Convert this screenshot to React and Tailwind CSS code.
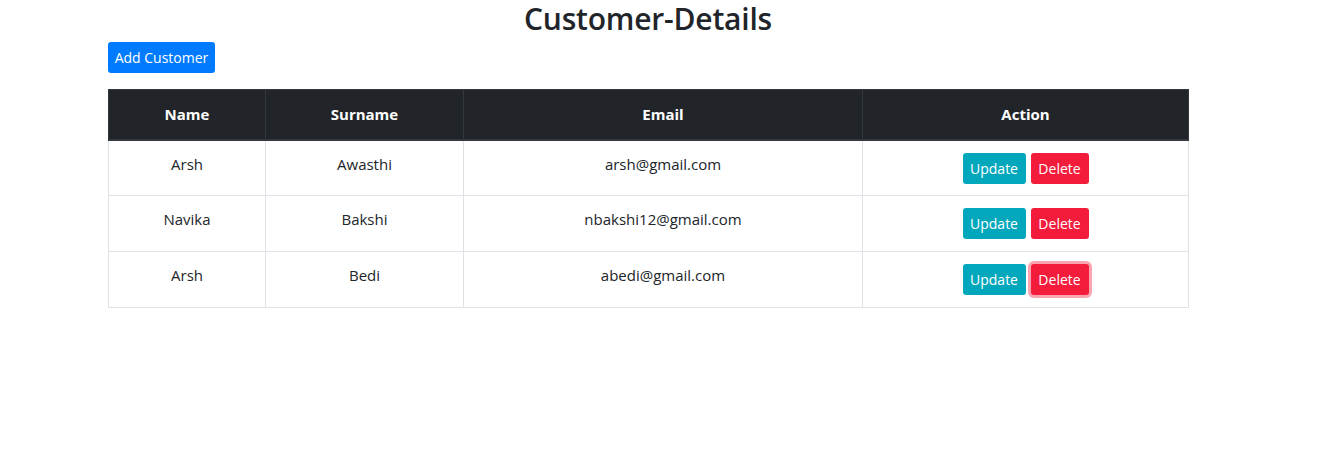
import React from "react"

const customers = [
  { name: "Arsh", surname: "Awasthi", email: "arsh@gmail.com" },
  { name: "Navika", surname: "Bakshi", email: "nbakshi12@gmail.com" },
  { name: "Arsh", surname: "Bedi", email: "abedi@gmail.com", focused: true },
]

function App() {
  return (
    <div className="min-h-[449px] bg-white text-[#212529] font-['Open_Sans',sans-serif]">
      <div className="ml-[108px] w-[1080px]">
        <h2 className="h-[38px] mb-[4px] text-center text-[30px] font-semibold leading-[38px] tracking-[-0.2px]">
          Customer-Details
        </h2>
        <button className="h-[31px] w-[107px] rounded-[3px] bg-[#007bff] text-[14px] text-white leading-[31px]">
          Add Customer
        </button>
        <table className="mt-[16px] w-[1080px] table-fixed border-collapse text-center text-[15px]">
          <colgroup>
            <col className="w-[157px]" />
            <col className="w-[198px]" />
            <col className="w-[399px]" />
            <col className="w-[326px]" />
          </colgroup>
          <thead>
            <tr className="h-[50px] bg-[#212529] text-white">
              <th className="border border-[#32383e] border-b-2 font-bold">Name</th>
              <th className="border border-[#32383e] border-b-2 font-bold">Surname</th>
              <th className="border border-[#32383e] border-b-2 font-bold">Email</th>
              <th className="border border-[#32383e] border-b-2 font-bold">Action</th>
            </tr>
          </thead>
          <tbody>
            {customers.map((c, i) => (
              <tr key={i} className="h-[56px]">
                <td className="border border-[#dee2e6] align-top pt-[11px] leading-[24px]">{c.name}</td>
                <td className="border border-[#dee2e6] align-top pt-[11px] leading-[24px]">{c.surname}</td>
                <td className="border border-[#dee2e6] align-top pt-[11px] leading-[24px]">{c.email}</td>
                <td className="border border-[#dee2e6] align-top pt-[12px]">
                  <div className="flex justify-center gap-[5px]">
                    <button className="h-[31px] w-[63px] rounded-[3px] bg-[#03a7bb] text-[14px] text-white">
                      Update
                    </button>
                    <button
                      className={
                        c.focused
                          ? "h-[31px] w-[58px] rounded-[3px] bg-[#f31c3a] text-[14px] text-white shadow-[0_0_0_3px_rgba(243,28,58,0.4)]"
                          : "h-[31px] w-[58px] rounded-[3px] bg-[#f31c3a] text-[14px] text-white"
                      }
                    >
                      Delete
                    </button>
                  </div>
                </td>
              </tr>
            ))}
          </tbody>
        </table>
      </div>
    </div>
  )
}

export default App
